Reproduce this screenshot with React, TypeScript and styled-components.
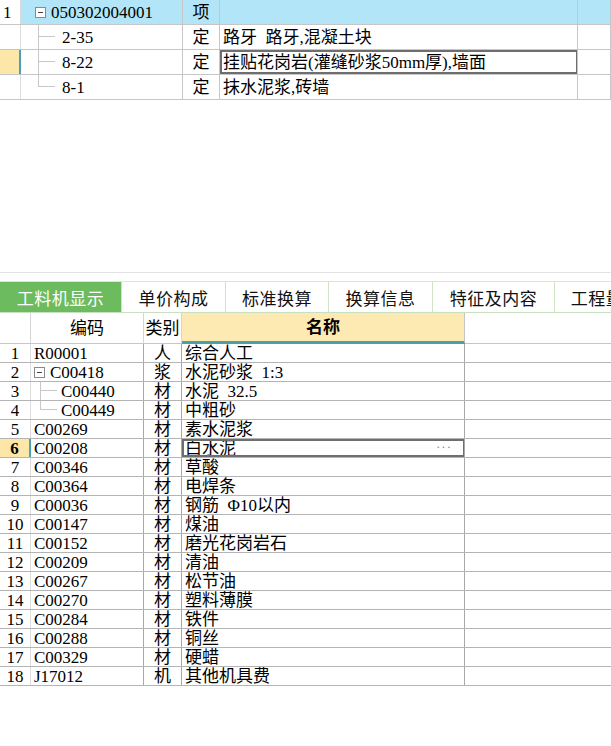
import React from 'react';
import styled, { createGlobalStyle, css } from 'styled-components';

const GlobalStyle = createGlobalStyle`
  html, body {
    margin: 0;
    padding: 0;
    background: #ffffff;
  }
  body {
    font-family: "Liberation Serif", "Noto Sans CJK SC", serif;
    font-size: 17px;
    color: #000000;
  }
`;

const Page = styled.div`
  width: 611px;
  height: 746px;
  overflow: hidden;
  display: flex;
  flex-direction: column;
  background: #ffffff;
`;

/* ---------- top grid ---------- */

const TopGrid = styled.div`
  display: flex;
  flex-direction: column;
`;

const TopRow = styled.div`
  display: grid;
  grid-template-columns: 21px 162px 37px 358px 1fr;
  height: 25px;
  border-bottom: 1px solid #c6c6c6;
  box-sizing: border-box;
`;

const Cell = styled.div<{ $bg?: string; $align?: 'left' | 'center'; $bold?: boolean }>`
  position: relative;
  display: flex;
  align-items: center;
  justify-content: ${p => (p.$align === 'center' ? 'center' : 'flex-start')};
  padding: 0 3px;
  box-sizing: border-box;
  border-right: 1px solid #c6c6c6;
  background: ${p => p.$bg || 'transparent'};
  font-weight: ${p => (p.$bold ? 'bold' : 'normal')};
  white-space: pre;
  overflow: hidden;
  line-height: 1;
`;

const NumCell = styled(Cell)<{ $current?: boolean }>`
  border-right: 1px solid #dcdcdc;
  ${p =>
    p.$current &&
    css`
      background: #fde7a8;
      border-right: 2px solid #4a9fc0;
    `}
`;

const Selected = styled.div`
  position: absolute;
  inset: 0 -1px 0 0;
  border: 2px solid #6e6e6e;
  pointer-events: none;
`;

const Ellipsis = styled.span`
  position: absolute;
  right: 12px;
  top: 1px;
  color: #6c8cb4;
  font-size: 13px;
  letter-spacing: 1px;
`;

/* tree drawing */

const Tree = styled.span<{ $indent: number }>`
  display: inline-flex;
  align-items: center;
  padding-left: ${p => p.$indent}px;
`;

const Toggle = styled.span`
  display: inline-block;
  width: 9px;
  height: 9px;
  border: 1px solid #8a8a8a;
  position: relative;
  margin-right: 5px;
  background: #fff;
  &::after {
    content: '';
    position: absolute;
    left: 2px;
    right: 2px;
    top: 4px;
    height: 1px;
    background: #444;
  }
`;

const Branch = styled.span<{ $top: number; $left: number; $last?: boolean }>`
  position: absolute;
  left: ${p => p.$left}px;
  top: ${p => p.$top}px;
  bottom: ${p => (p.$last ? '50%' : '0')};
  width: 16px;
  border-left: 1px solid #c8c8c8;
  &::after {
    content: '';
    position: absolute;
    left: 0;
    width: 16px;
    bottom: ${p => (p.$last ? '0' : 'calc(50% + 0px)')};
    border-top: 1px solid #c8c8c8;
  }
`;

/* ---------- splitter & tabs ---------- */

const Spacer = styled.div`
  height: 172px;
  border-bottom: 1px solid #e2e2e2;
`;

const TabBar = styled.div`
  margin-top: 8px;
  height: 30px;
  display: flex;
  border-top: 1px solid #d6e8cf;
  border-bottom: 1px solid #c8e0bf;
  box-sizing: content-box;
`;

const Tab = styled.div<{ $active?: boolean; $w: number }>`
  flex: 0 0 ${p => p.$w}px;
  display: flex;
  align-items: center;
  justify-content: center;
  border-right: 1px solid #cfe4c6;
  box-sizing: border-box;
  white-space: nowrap;
  overflow: hidden;
  background: ${p => (p.$active ? '#6cbb5e' : '#ffffff')};
  color: ${p => (p.$active ? '#ffffff' : '#111111')};
  letter-spacing: 0.5px;
`;

/* ---------- bottom grid ---------- */

const BottomGrid = styled.div`
  display: flex;
  flex-direction: column;
`;

const bottomCols = '31px 113px 38px 283px 1fr';

const HeadRow = styled.div`
  display: grid;
  grid-template-columns: ${bottomCols};
  height: 31px;
  border-bottom: 1px solid #c6c6c6;
  box-sizing: border-box;
`;

const HeadCell = styled(Cell)<{ $name?: boolean; $last?: boolean }>`
  justify-content: center;
  border-right: ${p => (p.$last ? 'none' : '1px solid #d4d4d4')};
  ${p =>
    p.$name &&
    css`
      background: #fde9b2;
      border-bottom: 3px solid #4e9eaa;
      border-right: 1px solid #c6c6c6;
      font-weight: bold;
      margin-bottom: -1px;
    `}
`;

const BottomRow = styled.div`
  display: grid;
  grid-template-columns: ${bottomCols};
  height: 19px;
  border-bottom: 1px solid #b4b4b4;
  box-sizing: border-box;
`;

const BNum = styled(Cell)<{ $current?: boolean }>`
  justify-content: center;
  padding: 0;
  border-right: 1px solid #dcdcdc;
  ${p =>
    p.$current &&
    css`
      background: #fde7a8;
      font-weight: bold;
      border-right: 2px solid #4a9fc0;
    `}
`;

const BCell = styled(Cell)<{ $last?: boolean }>`
  border-right: ${p => (p.$last ? 'none' : '1px solid #a8a8a8')};
`;

type TopItem = { no: string; code: string; kind: string; name: string; level: number; head?: boolean; current?: boolean; last?: boolean };

const topItems: TopItem[] = [
  { no: '1', code: '050302004001', kind: '项', name: '', level: 0, head: true },
  { no: '', code: '2-35', kind: '定', name: '路牙  路牙,混凝土块', level: 1 },
  { no: '', code: '8-22', kind: '定', name: '挂贴花岗岩(灌缝砂浆50mm厚),墙面', level: 1, current: true },
  { no: '', code: '8-1', kind: '定', name: '抹水泥浆,砖墙', level: 1, last: true },
];

type Material = { code: string; kind: string; name: string; level?: number; parent?: boolean; last?: boolean };

const materials: Material[] = [
  { code: 'R00001', kind: '人', name: '综合人工' },
  { code: 'C00418', kind: '浆', name: '水泥砂浆  1:3', parent: true },
  { code: 'C00440', kind: '材', name: '水泥  32.5', level: 1 },
  { code: 'C00449', kind: '材', name: '中粗砂', level: 1, last: true },
  { code: 'C00269', kind: '材', name: '素水泥浆' },
  { code: 'C00208', kind: '材', name: '白水泥' },
  { code: 'C00346', kind: '材', name: '草酸' },
  { code: 'C00364', kind: '材', name: '电焊条' },
  { code: 'C00036', kind: '材', name: '钢筋  Φ10以内' },
  { code: 'C00147', kind: '材', name: '煤油' },
  { code: 'C00152', kind: '材', name: '磨光花岗岩石' },
  { code: 'C00209', kind: '材', name: '清油' },
  { code: 'C00267', kind: '材', name: '松节油' },
  { code: 'C00270', kind: '材', name: '塑料薄膜' },
  { code: 'C00284', kind: '材', name: '铁件' },
  { code: 'C00288', kind: '材', name: '铜丝' },
  { code: 'C00329', kind: '材', name: '硬蜡' },
  { code: 'J17012', kind: '机', name: '其他机具费' },
];

const tabs = [
  { label: '工料机显示', w: 122, active: true },
  { label: '单价构成', w: 104 },
  { label: '标准换算', w: 103 },
  { label: '换算信息', w: 104 },
  { label: '特征及内容', w: 122 },
  { label: '工程量明细', w: 120 },
];

const CURRENT_MATERIAL = 5;

export default function App() {
  return (
    <Page>
      <GlobalStyle />
      <TopGrid>
        {topItems.map((r, i) => (
          <TopRow key={i}>
            <NumCell $current={r.current}>{r.no}</NumCell>
            <Cell $bg={r.head ? '#b2e5f7' : undefined}>
              {r.head ? (
                <Tree $indent={11}>
                  <Toggle />
                  {r.code}
                </Tree>
              ) : (
                <>
                  <Branch $left={17} $top={0} $last={r.last} />
                  <Tree $indent={38}>{r.code}</Tree>
                </>
              )}
            </Cell>
            <Cell $align="center" $bg={r.head ? '#b2e5f7' : undefined}>
              {r.kind}
            </Cell>
            <Cell $bg={r.head ? '#b2e5f7' : undefined}>
              {r.name}
              {r.current && <Selected />}
            </Cell>
            <Cell $bg={r.head ? '#b2e5f7' : undefined} />
          </TopRow>
        ))}
      </TopGrid>

      <Spacer />

      <TabBar>
        {tabs.map(t => (
          <Tab key={t.label} $active={t.active} $w={t.w}>
            {t.label}
          </Tab>
        ))}
      </TabBar>

      <BottomGrid>
        <HeadRow>
          <HeadCell />
          <HeadCell>编码</HeadCell>
          <HeadCell>类别</HeadCell>
          <HeadCell $name>名称</HeadCell>
          <HeadCell $last />
        </HeadRow>
        {materials.map((m, i) => {
          const current = i === CURRENT_MATERIAL;
          return (
            <BottomRow key={m.code}>
              <BNum $current={current}>{i + 1}</BNum>
              <BCell>
                {m.parent ? (
                  <Tree $indent={0}>
                    <Toggle />
                    {m.code}
                  </Tree>
                ) : m.level ? (
                  <>
                    <Branch $left={9} $top={-1} $last={m.last} />
                    <Tree $indent={27}>{m.code}</Tree>
                  </>
                ) : (
                  m.code
                )}
              </BCell>
              <BCell $align="center">{m.kind}</BCell>
              <BCell>
                {m.name}
                {current && (
                  <>
                    <Selected />
                    <Ellipsis>···</Ellipsis>
                  </>
                )}
              </BCell>
              <BCell $last />
            </BottomRow>
          );
        })}
      </BottomGrid>
    </Page>
  );
}
